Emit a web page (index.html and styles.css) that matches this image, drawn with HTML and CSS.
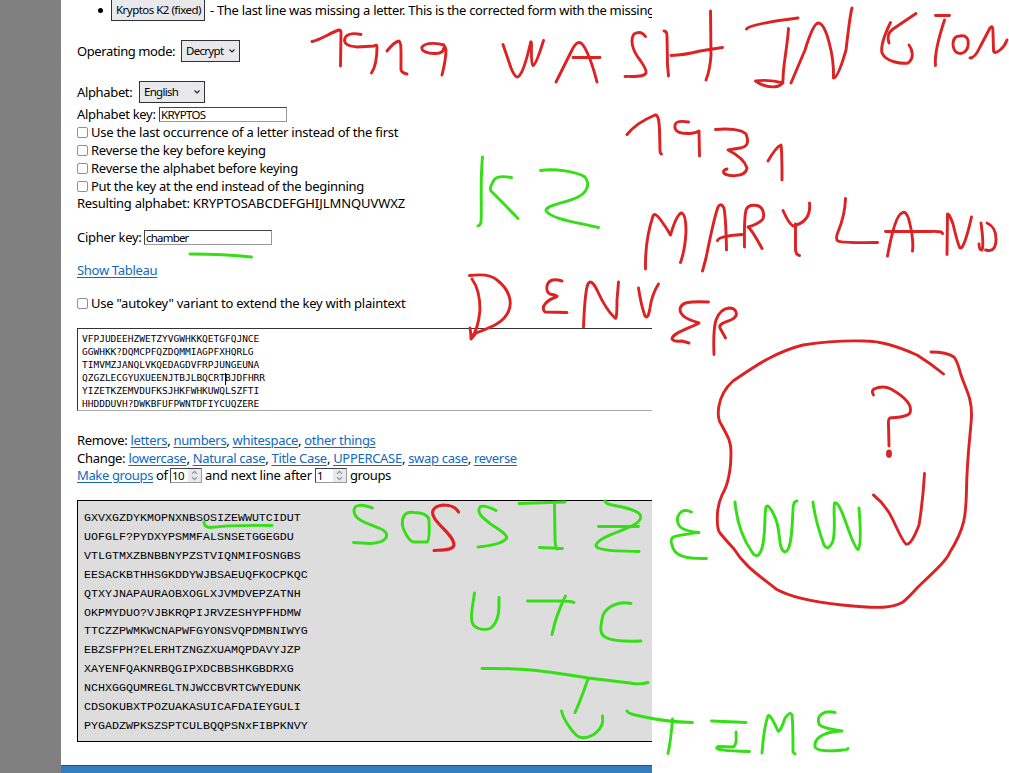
FILE: index.html
```html
<!DOCTYPE html>
<html lang="en">
<head>
<meta charset="utf-8">
<title>Vigenère cipher notes</title>
<link rel="stylesheet" href="styles.css">
</head>
<body>
<div class="page">
  <div class="rail"></div>
  <main class="content">
    <div class="row sample"><span class="bullet"></span><button class="button">Kryptos K2 (fixed)</button><span class="text about">- The last line was missing a letter. This is the corrected form with the missing</span></div>
    <div class="row mode"><span class="text">Operating mode:</span><span class="select decrypt">Decrypt<svg width="8" height="6" viewBox="0 0 8 6"><path d="M1.5 1.5 4 4 6.5 1.5"/></svg></span></div>
    <div class="row alphabet"><span class="text">Alphabet:</span><span class="select english">English<svg width="8" height="6" viewBox="0 0 8 6"><path d="M1.5 1.5 4 4 6.5 1.5"/></svg></span></div>
    <div class="row key"><span class="text">Alphabet key:</span><span class="field">KRYPTOS</span></div>
    <div class="row option"><span class="check"></span><span class="text last">Use the last occurrence of a letter instead of the first</span></div>
    <div class="row option"><span class="check"></span><span class="text">Reverse the key before keying</span></div>
    <div class="row option"><span class="check"></span><span class="text">Reverse the alphabet before keying</span></div>
    <div class="row option"><span class="check"></span><span class="text end">Put the key at the end instead of the beginning</span></div>
    <div class="row result"><span class="text">Resulting alphabet: <span class="letters">KRYPTOSABCDEFGHIJLMNQUVWXZ</span></span></div>
    <div class="row cipher"><span class="text">Cipher key:</span><span class="field chamber">chamber</span></div>
    <div class="row tableau"><a class="text">Show Tableau</a></div>
    <div class="row autokey"><span class="check"></span><span class="text last">Use "autokey" variant to extend the key with plaintext</span></div>
    <pre class="input">VFPJUDEEHZWETZYVGWHKKQETGFQJNCE
GGWHKK?DQMCPFQZDQMMIAGPFXHQRLG
TIMVMZJANQLVKQEDAGDVFRPJUNGEUNA
QZGZLECGYUXUEENJTBJLBQCRT<i class="caret"></i>BJDFHRR
YIZETKZEMVDUFKSJHKFWHKUWQLSZFTI
HHDDDUVH?DWKBFUFPWNTDFIYCUQZERE</pre>
    <div class="row remove"><span class="text">Remove: <a>letters</a>, <a>numbers</a>, <a>whitespace</a>, <a>other things</a></span></div>
    <div class="row change"><span class="text">Change: <a>lowercase</a>, <a>Natural case</a>, <a>Title Case</a>, <a>UPPERCASE</a>, <a>swap case</a>, <a>reverse</a></span></div>
    <div class="row groups"><span class="text make"><a>Make groups</a> of</span><span class="number">10<svg width="13" height="13" viewBox="0 0 13 13"><path d="M4 4.8 6.5 2.3 9 4.8M4 8.2 6.5 10.7 9 8.2"/></svg></span><span class="text next">and next line after</span><span class="number">1<svg width="13" height="13" viewBox="0 0 13 13"><path d="M4 4.8 6.5 2.3 9 4.8M4 8.2 6.5 10.7 9 8.2"/></svg></span><span class="text unit">groups</span></div>
    <pre class="output">GXVXGZDYKMOPNXNBSOSIZEWWUTCIDUT
UOFGLF?PYDXYPSMMFALSNSETGGEGDU
VTLGTMXZBNBBNYPZSTVIQNMIFOSNGBS
EESACKBTHHSGKDDYWJBSAEUQFKOCPKQC
QTXYJNAPAURAOBXOGLXJVMDVEPZATNH
OKPMYDUO?VJBKRQPIJRVZESHYPFHDMW
TTCZZPWMKWCNAPWFGYONSVQPDMBNIWYG
EBZSFPH?ELERHTZNGZXUAMQPDAVYJZP
XAYENFQAKNRBQGIPXDCBBSHKGBDRXG
NCHXGGQUMREGLTNJWCCBVRTCWYEDUNK
CDSOKUBXTPOZUAKASUICAFDAIEYGULI
PYGADZWPKSZSPTCULBQQPSNxFIBPKNVY</pre>
    <div class="footer"></div>
  </main>
  <svg class="ink" width="1009" height="773" viewBox="0 0 1009 773">
    <g class="red">
      <!-- 1929 -->
      <path d="M312 41.5C320 40 330 33 339 30Q341 29.5 341 33L340.5 66"/>
      <path d="M361 34.5C355 33 347 33 345 38C343 44 348 46 357 47L374 46Q377 44 377 47C377 56 376 66 371.5 73"/>
      <path d="M387 51Q394 42 399 41Q401 42 401 52L401 70Q402 73 407 74"/>
      <path d="M444 45C438 43 426 42 422 47C420 51 428 54 436 53.5Q443 53 443.5 49Q445 44 446 50C446 58 444 67 442 75"/>
      <!-- Washington -->
      <path d="M503 44.5L511 68Q516 80 519 76Q524 71 530 45Q531 39 531.5 44Q531 64 533 65.5Q536 65 543.5 40.5"/>
      <path d="M556 82L572 50Q578 38 583 45Q590 55 597 82M573 57.5H600"/>
      <path d="M645.5 36.5Q641 30 634 34C630 40 632 50 640 60Q647 70 646 73C643 78 633 76 625 76.5"/>
      <path d="M664 31Q667 31 667 36L667.5 65 668.5 76M710.5 11L711 55Q710 70 706 80M671 55.5Q685 55 700 51L722.5 47.5"/>
      <path d="M746.5 29Q750 24 798 18M788.5 28.5C787 50 783 65 783 80C782 90 765 88 755.5 81Q770 79 783 83"/>
      <path d="M791 83L805 50Q813 24 818 23Q824 23 829 42Q834 60 833.5 78Q838 78 846 50Q850 15 852 8"/>
      <path d="M916 13.5L893 29Q886 34 889 43M890.5 22.5Q880 44 882 53C886 62 901 64 908 63C915 58 912 49 909 45"/>
      <path d="M935.5 15.5H949.5M944.5 20Q934 52 935.5 65.5"/>
      <path d="M960 36C951 36 952 48 956 52C962 56 967 51 968 46C969 38 966 35 960 36"/>
      <path d="M970 58Q975 58 980 47L990 28Q993 24 993 32L993.5 50Q994 55 1000 50Q1005 46 1007 40"/>
      <!-- 1931 -->
      <path d="M627 134.5Q636 123 655 115Q659 114 659.5 130L660 150Q660 154 661.5 154"/>
      <path d="M688.5 122Q676 120 675 125C674 132 680 134 690 133.5Q696 133 699 131L699.5 156"/>
      <path d="M715.5 129.5C730 128 742 130 746 134C750 144 746 147 740 148L728 150Q744 158 747 168C746 178 724 177 723.5 172Q723 170 727 169"/>
      <path d="M768 161Q776 147 781 145Q782 150 782 180"/>
      <!-- Maryland -->
      <path d="M645.5 269C645 245 650 225 653 216Q655 212 660 219Q666 227 670.5 235Q676 216 681 213Q686 213 686 232Q685 250 680.5 262.5"/>
      <path d="M702.5 271L706 258Q714 218 718 207Q721 202 724 208Q726 220 726.5 250M717.5 240.5Q719 236 742 234.5"/>
      <path d="M744.5 247Q744 218 746 210Q748 204 757 205.5C764 207 765 217 762 220Q758 224 748 227Q752 230 762 248.5"/>
      <path d="M783 210.5Q789 224 793 226C802 224 811 218 809.5 203M795.5 224V250Q796 255 799.5 255.5"/>
      <path d="M845.5 198.5Q845 215 838 232Q835 239 838 241Q842 243 877.5 242.5"/>
      <path d="M887.5 256Q895 215 902 213Q906 210 909 220Q914 240 912.5 251M885.5 231.5H930Q943 231 942.5 233.5"/>
      <path d="M947 254.5L947.5 214Q949 213 953 224Q958 245 960 248Q964 250 971.5 217"/>
      <path d="M981 223Q984 245 982 250Q979 250 979 244M987 223Q996 227 996 239Q996 253 985.5 250"/>
      <!-- Denver -->
      <path d="M469.5 275.5Q490 273 497 280C510 290 512 302 509 310C505 322 492 327 476 333L471 339Q471 333 470 328M472 279Q480 290 480 310Q478 330 471.5 338"/>
      <path d="M562 281Q549 277 547 286Q546 292 550 294Q560 296 556 297C547 300 540 307 545 312L567 312.5"/>
      <path d="M583.5 327Q585 290 588 284Q591 278 597 290Q606 310 615 318Q617 321 617 300L618.5 282"/>
      <path d="M638.5 288Q641 305 645 316Q648 320 650 308Q652 294 658.5 284"/>
      <path d="M708.5 302C690 301 681 302 680 309C680 317 690 320 699 323C690 328 672 333 672 339Q674 342 682 341L689 343"/>
      <path d="M714 354.5Q713 330 716 320Q720 309 729 308C737 308 738 315 734 318C730 322 718 322 720 328L725.5 338"/>
      <!-- circled question mark and V -->
      <path d="M943.5 374Q930 363 917 355C895 345 880 341 865 341Q835 340 803 345C775 352 755 366 733 381C715 397 717 420 721 424C728 437 731 441 731 452C731 470 728 485 722 495C715 510 717 530 720 533Q724 538 734 549C745 567 760 576 776 589Q795 600 842 605C880 609 893 608 903 602Q908 598 918 587C935 571 947 560 950 552C965 528 966 515 966.5 490C967 455 971 430 971.5 416C972 398 966 390 961 375Q957 360 954 357Q947 352 931 352"/>
      <path d="M873.5 395Q871 391 874 389Q883 385 891 389C905 397 913 405 910 413C906 418 896 417 890 418Q888 419 888.5 425L889 446"/>
      <ellipse cx="889" cy="453.7" rx="1.5" ry="2.7"/>
      <path d="M873.5 495Q886 505 893 520Q903 542 906 544Q911 546 919 525Q923 500 924.5 473.5"/>
      <!-- second S -->
      <path class="bold" d="M458.5 512Q455 505 443 505C433 506 430 512 435 519C440 527 454 536 454 545C453 551 440 550 434 550.5"/>
    </g>
    <g class="green">
      <!-- underlines -->
      <path d="M190 254Q225 254 251.5 257M204 522Q204 527 210 527.5Q230 525 272 525.5"/>
      <!-- K2 -->
      <path d="M482.5 157C480 180 482 210 481 222Q480 226 478 226M511.5 177.5Q497 175 494 180Q489 188 491 191L501 201Q512 212 518 218.5"/>
      <path d="M540.5 170.5C555 168 577 172 585 177C591 185 586 193 578 197C566 203 545 205 546 211C552 219 575 222 598.5 227.5"/>
      <!-- SOS SIZE WW -->
      <path d="M372.5 508C362 504 354 504 354 511C354 520 368 524 379 528C392 533 388 543 370 543.5L353.5 542.5"/>
      <path d="M414 512.5Q404 511 402.5 520C401 530 410 542 414 542L427 542Q430 540 429 520Q428 513 414 512.5"/>
      <path d="M496 510.5Q484 504 480 507C476 513 483 518 492 525Q510 536 506 539Q500 545 478 547"/>
      <path d="M519 503.5L565 502M554.5 503L555 537Q555 547 557 549M539.5 547.5L562.5 548.5"/>
      <path d="M605 501Q606 504 612 505C640 510 645 515 638 522C630 530 600 535 596 545C595 551 620 551 639 551.5M598.5 526.5H638.5"/>
      <path d="M691.5 512C680 507 676 517 678 523Q680 531 699 532.5C672 536 669 536 672 545C674 557 688 559 706.5 558.5"/>
      <path d="M735 502C737 525 745 542 752 552Q758 561 762 548C766 535 764 515 766 507Q768 503 774 515C782 530 777 549 785 552C792 551 792 525 793 510Q793 501 797 501"/>
      <path d="M813 502Q815 520 824 545Q828 552 833 541C836 527 833 510 834.5 503Q838 500 846 523C853 543 856 549 858 549.5Q862 545 859 508"/>
      <!-- UTC -->
      <path d="M474.5 593C473 605 470 615 472 622C475 631 487 630 491 628C500 620 499 608 499 597.5"/>
      <path d="M527.5 601H560Q572 601 574 602.5M565.5 596Q556 615 552 634.5"/>
      <path d="M631 603.5C620 601 608 605 603 615C600 628 599 635 607 638Q615 642 641 641"/>
      <path d="M482 668.5C520 668 540 670 588 678L630 683Q640 685 648 682.5M588 679Q580 702 575 712.5"/>
      <!-- U TIME -->
      <path d="M561.5 711C564 722 575 735 579 737C590 740 605 730 602.5 716"/>
      <path d="M627 711Q628 714 640 716Q665 722 692.5 722.5M672.5 719Q671 740 668 753.5"/>
      <path d="M711.5 721L746 722.5M736 732Q737 746 733 747L718 746.5C712 750 728 751 749.5 751.5"/>
      <path d="M762 753Q764 727 768 716Q770 713 778 731Q780 733 785 718Q790 711 792 715Q793 722 793 752L795 754"/>
      <path d="M835 712.5C824 710 816 715 819 724Q821 728 842 731C820 732 814 740 815 747C817 752 835 751 843 750Q847 750 848 748.5"/>
    </g>
  </svg>
</div>
</body>
</html>
```
FILE: styles.css
```css
* { box-sizing: border-box; }
body { margin: 0; width: 1009px; height: 773px; overflow: hidden; background: #fff; color: #000; font: 13px/18px "Noto Sans", sans-serif; }
.page { position: relative; display: flex; height: 773px; }
.rail { flex: none; width: 61px; background: #808080; }
.content { display: flex; flex-direction: column; flex: none; width: 591px; height: 773px; overflow: hidden; padding: 1px 0 0 16px; }

.row { display: flex; align-items: center; flex: none; height: 18px; white-space: pre; }
.text { flex: none; letter-spacing: -0.3px; }
a { color: #1268bd; text-decoration: underline; text-underline-offset: 2px; text-decoration-thickness: 1px; }

.bullet { flex: none; width: 5px; height: 5px; margin: 0 8px 0 21px; border-radius: 50%; background: #000; }
.button, .select { display: flex; align-items: center; flex: none; height: 22px; margin: 0; border: 1px solid #303035; background: #e9e9ed; color: #000; font: 11.5px/20px "Noto Sans", sans-serif; padding: 0 4px; }
.button { width: 94px; letter-spacing: -0.52px; }
.about { margin-left: 5px; letter-spacing: -0.31px; }
.select { justify-content: space-between; letter-spacing: -0.7px; padding: 0 3px 0 4px; }
.select svg, .number svg { fill: none; stroke: #222; stroke-width: 1.2; }
.decrypt { width: 59px; }
.english { width: 66px; }
.field { flex: none; width: 128px; height: 15px; border: 1px solid #999; border-top-color: #444; border-left-color: #444; padding-left: 1px; font-size: 11.5px; line-height: 13px; letter-spacing: -0.7px; }
.chamber { font-size: 11.5px; letter-spacing: -0.8px; }
.check { flex: none; width: 11px; height: 11px; margin: 0 3px 0 0; border: 1px solid #8f8f9d; border-radius: 2px; }

.mode { margin-top: 23px; }
.mode .text { width: 104px; letter-spacing: -0.4px; }
.alphabet { margin-top: 23px; }
.alphabet .text { width: 62px; letter-spacing: -0.35px; }
.key { margin-top: 4px; }
.key .text { width: 82px; }
.option .text { letter-spacing: -0.26px; }
.option .last, .autokey .last { letter-spacing: -0.23px; }
.option .end { letter-spacing: -0.29px; }
.result { margin-top: -1px; }
.result .text { letter-spacing: -0.28px; }
.result .letters { letter-spacing: -0.07px; }
.cipher { margin-top: 16px; }
.cipher .text { width: 67px; }
.tableau, .autokey { margin-top: 15px; }

.input { flex: none; height: 83px; margin: 16px 0 0; padding: 3px 0 0 4px; border: 1px solid #aaa; border-top-color: #333; border-left-color: #333; border-right: 0; font: 9.5px/13px "DejaVu Sans Mono", monospace; }
.caret { display: inline-block; width: 1px; height: 12px; margin: -3px -1px -3px 0; vertical-align: middle; background: #000; }

.remove { margin-top: 20px; }
.remove .text { letter-spacing: -0.32px; }
.groups { margin-top: -1px; }
.make { width: 93px; letter-spacing: -0.36px; }
.number { display: flex; justify-content: space-between; flex: none; width: 32px; height: 15px; border: 1px solid #999; border-top-color: #444; border-left-color: #444; padding-left: 1px; font-size: 11.5px; line-height: 13px; letter-spacing: -0.5px; }
.number svg { background: #e9e9ed; stroke: #8f8f9d; }
.next { width: 113px; padding-left: 3px; letter-spacing: -0.24px; }
.unit { padding-left: 3px; letter-spacing: -0.4px; }

.output { flex: none; height: 242px; margin: 16px 0 0; padding: 8px 0 0 6px; border: 1px solid #000; border-right: 0; background: #ddd; font: 11.67px/18.9px "Liberation Mono", monospace; }
.footer { flex: none; height: 8px; margin: 23px 0 0 -16px; border-top: 1px solid #1f5580; background: #337ebf; }

.ink { position: absolute; top: 0; left: 0; fill: none; stroke-width: 2.9; stroke-linecap: round; stroke-linejoin: round; }
.red { stroke: #dc2223; }
.green { stroke: #34df16; }
.bold { stroke-width: 3.1; }
```
